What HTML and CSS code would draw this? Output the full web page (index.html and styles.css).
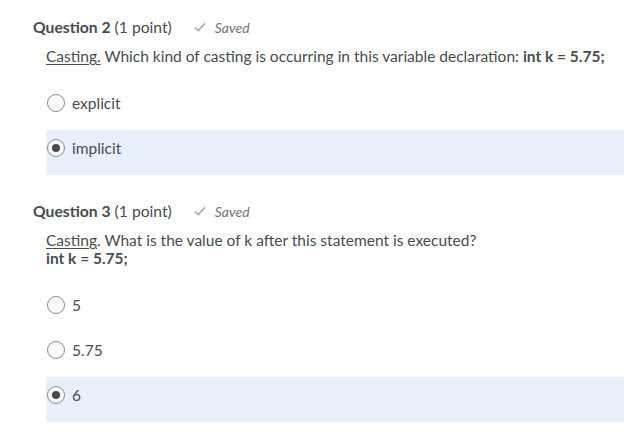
FILE: index.html
```html
<!DOCTYPE html>
<html lang="en">
<head>
<meta charset="utf-8">
<link rel="stylesheet" href="styles.css">
</head>
<body>
<div class="page">
  <section class="question">
    <div class="q-head">
      <span class="q-title"><b>Question 2</b> (1 point)</span>
      <span class="saved"><svg class="check" viewBox="0 0 12 10" width="12" height="10"><path d="M1 5.5 L4.3 8.6 L11 1.2" fill="none" stroke="#a3a7aa" stroke-width="1.6"/></svg><i>Saved</i></span>
    </div>
    <div class="q-body">
      <p class="q-text"><u>Casting.</u> Which kind of casting is occurring in this variable declaration: <b>int k = 5.75;</b></p>
    </div>
    <div class="options">
      <label class="option"><span class="radio"></span><span>explicit</span></label>
      <label class="option selected"><span class="radio checked"></span><span>implicit</span></label>
    </div>
  </section>
  <section class="question q3">
    <div class="q-head">
      <span class="q-title"><b>Question 3</b> (1 point)</span>
      <span class="saved"><svg class="check" viewBox="0 0 12 10" width="12" height="10"><path d="M1 5.5 L4.3 8.6 L11 1.2" fill="none" stroke="#a3a7aa" stroke-width="1.6"/></svg><i>Saved</i></span>
    </div>
    <div class="q-body">
      <p class="q-text"><u>Casting</u>. What is the value of k after this statement is executed?<br><b>int k = 5.75;</b></p>
    </div>
    <div class="options">
      <label class="option"><span class="radio"></span><span>5</span></label>
      <label class="option"><span class="radio"></span><span>5.75</span></label>
      <label class="option selected"><span class="radio checked"></span><span>6</span></label>
    </div>
  </section>
</div>
</body>
</html>
```
FILE: styles.css
```css
html, body {
  margin: 0;
  padding: 0;
  background: #ffffff;
}
body {
  font-family: Lato, "Open Sans", sans-serif;
  color: #494c4e;
}
.page {
  padding: 16px 17px 0 33px;
}
.q-head {
  display: flex;
  align-items: center;
  height: 22px;
  gap: 22px;
}
.q-title {
  font-size: 15.7px;
  line-height: 22px;
}
.q-title b {
  font-weight: 700;
}
.saved {
  display: flex;
  align-items: center;
  gap: 9px;
  color: #6e7376;
  font-size: 14px;
}
.check {
  display: block;
}
.q-body {
  margin: 9px 0 0 13px;
}
.q-text {
  margin: 0;
  font-size: 15.5px;
  line-height: 18px;
}
.q-text u {
  text-underline-offset: 2px;
}
.options {
  margin: 20px 0 0 13px;
  display: flex;
  flex-direction: column;
}
.option {
  display: flex;
  align-items: center;
  gap: 7px;
  height: 45px;
  box-sizing: border-box;
  padding: 0 0 9px 1px;
  font-size: 15.5px;
  line-height: 20px;
}
.option.selected {
  background: #e8f1fb;
}
.radio {
  width: 18px;
  height: 18px;
  box-sizing: border-box;
  border: 1px solid #868c8f;
  border-radius: 50%;
  background: #f9fafb;
  display: flex;
  align-items: center;
  justify-content: center;
}
.radio.checked::after {
  content: "";
  width: 8px;
  height: 8px;
  border-radius: 50%;
  background: #494c4e;
}
.q3 {
  margin-top: 25px;
}
```
